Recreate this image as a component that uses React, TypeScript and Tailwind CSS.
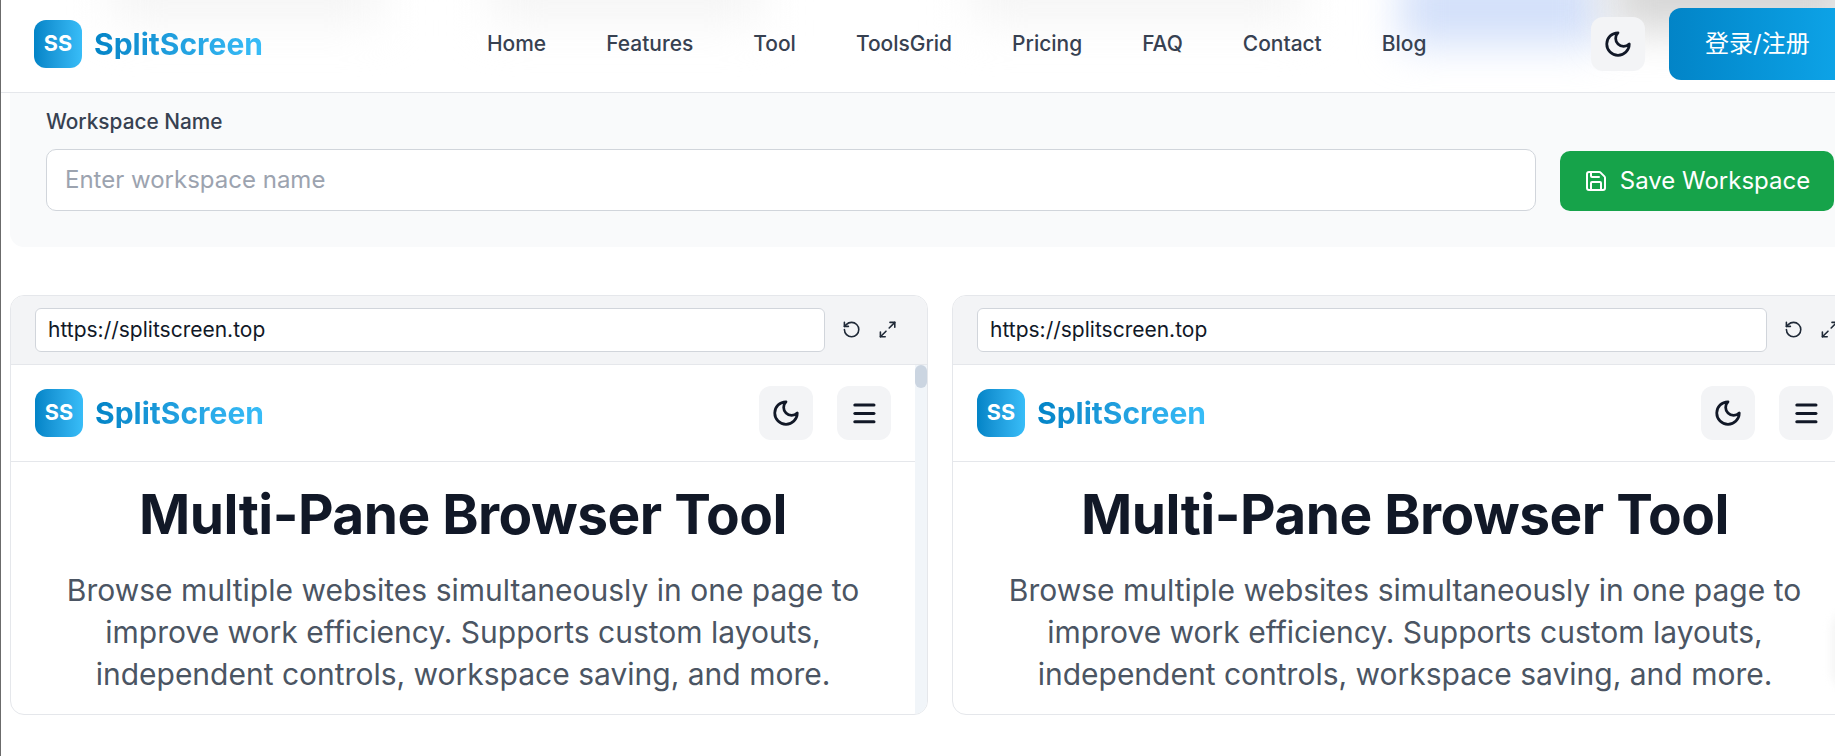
import { Menu, Save, RotateCcw, Maximize2 } from "lucide-react";

const NAV_LINKS = ["Home", "Features", "Tool", "ToolsGrid", "Pricing", "FAQ", "Contact", "Blog"];

const MoonIcon = () => (
  <svg viewBox="0 0 24 24" fill="none" stroke="currentColor" strokeWidth="2.2" strokeLinecap="round" strokeLinejoin="round" className="w-[30px] h-[30px] text-[#111827]">
    <path d="M12 3a6 6 0 0 0 9 9 9 9 0 1 1-9-9Z" />
  </svg>
);

const Logo = () => (
  <div className="flex items-center gap-[12px]">
    <div className="w-[48px] h-[48px] rounded-[12px] bg-gradient-to-r from-[#0284c7] to-[#38bdf8] flex items-center justify-center">
      <span className="text-white font-bold text-[21.6px] leading-none">SS</span>
    </div>
    <span className="text-[30px] font-bold leading-none bg-gradient-to-r from-[#0284c7] to-[#38bdf8] bg-clip-text text-transparent">
      SplitScreen
    </span>
  </div>
);

const Pane = () => (
  <div className="w-[918px] h-[420px] shrink-0 rounded-[14px] border border-[#e5e7eb] overflow-hidden flex flex-col bg-white">
    <div className="h-[69px] shrink-0 bg-[#f3f4f6] border-b border-[#e5e7eb] flex items-center pl-[24px]">
      <div className="w-[790px] h-[44px] shrink-0 bg-white border border-[#d1d5db] rounded-[6px] flex items-center pl-[12px] text-[21px] text-[#111827]">
        https://splitscreen.top
      </div>
      <RotateCcw className="w-[19.2px] h-[19.2px] ml-[17px] text-[#1f2937]" />
      <Maximize2 className="w-[19.2px] h-[19.2px] ml-[17px] text-[#1f2937]" />
    </div>
    <div className="flex-1 flex min-h-0">
      <div className="flex-1 min-w-0">
        <div className="h-[97px] border-b border-[#e5e7eb] flex items-center justify-between pl-[24px] pr-[24px]">
          <Logo />
          <div className="flex items-center gap-[24px]">
            <div className="w-[54px] h-[54px] rounded-[12px] bg-[#f3f4f6] flex items-center justify-center">
              <MoonIcon />
            </div>
            <div className="w-[54px] h-[54px] rounded-[12px] bg-[#f3f4f6] flex items-center justify-center">
              <Menu strokeWidth={2.5} className="w-[28.8px] h-[28.8px] text-[#111827]" />
            </div>
          </div>
        </div>
        <div className="px-[24px] text-center">
          <h1 className="mt-[18px] text-[55px] tracking-[-0.52px] leading-[69px] font-bold text-[#111827]">Multi-Pane Browser Tool</h1>
          <p className="mt-[20px] text-[30px] leading-[42px] text-[#4b5563]">
            Browse multiple websites simultaneously in one page to improve work efficiency. Supports custom layouts, independent controls, workspace saving, and more.
          </p>
        </div>
      </div>
      <div className="w-[12px] shrink-0 bg-[#f1f5f9]">
        <div className="h-[23px] rounded-full bg-[#cbd5e1]" />
      </div>
    </div>
  </div>
);

export default function App() {
  return (
    <div className="relative w-screen h-screen overflow-hidden bg-white border-l border-[#6b6b6b] font-['Inter',sans-serif]">
      <header className="relative h-[93px] border-b border-[#e5e7eb] bg-white overflow-hidden">
        {/* blurred page content behind the sticky nav */}
        <div className="absolute left-[110px] top-[-40px] w-[270px] h-[60px] bg-[#f4f4f4] blur-[24px]" />
        <div className="absolute left-[490px] top-[-40px] w-[270px] h-[60px] bg-[#f4f4f4] blur-[24px]" />
        <div className="absolute left-[970px] top-[-40px] w-[330px] h-[60px] bg-[#f4f4f4] blur-[24px]" />
        <div className="absolute left-[1400px] top-[-30px] w-[200px] h-[75px] bg-[#d3e0fa] blur-[20px]" />
        <div className="absolute left-[1610px] top-[-40px] w-[240px] h-[70px] bg-[#d5d5d5] blur-[22px]" />
        <div className="relative h-[88px] flex items-center pl-[33px]">
          <Logo />
          <nav className="absolute left-[486px] top-0 h-full flex items-center gap-[60px] text-[20.96px] font-medium text-[#374151]">
            {NAV_LINKS.map((link) => (
              <span key={link}>{link}</span>
            ))}
          </nav>
          <div className="absolute left-[1590px] top-[17px] w-[54px] h-[54px] rounded-[12px] bg-[#f3f4f6] flex items-center justify-center">
            <MoonIcon />
          </div>
          <div className="absolute left-[1668px] top-[8px] w-[180px] h-[72px] rounded-[12px] bg-gradient-to-r from-[#0284c7] to-[#0ea5e9] flex items-center pl-[36px] text-white text-[24px] font-['Inter','Noto_Sans_CJK_SC',sans-serif]">
            登录/注册
          </div>
        </div>
      </header>
      <main className="pl-[9px] w-[1900px]">
        <section className="h-[154px] w-[1880px] bg-[#f9fafb] rounded-b-[14px] pl-[36px] pt-[15px]">
          <label className="block text-[20.8px] leading-[28px] font-medium text-[#374151]">Workspace Name</label>
          <div className="mt-[13px] w-[1788px] flex items-end gap-[24px]">
            <input
              readOnly
              placeholder="Enter workspace name"
              className="flex-1 h-[62px] bg-white border border-[#d1d5db] rounded-[10px] px-[18px] pb-[2px] text-[24px] placeholder:text-[#9ca3af]"
            />
            <button className="w-[274px] h-[60px] shrink-0 rounded-[10px] bg-[#16a34a] flex items-center justify-center gap-[12px] text-white text-[24px]">
              <Save className="w-[24px] h-[24px]" />
              Save Workspace
            </button>
          </div>
        </section>
        <div className="mt-[48px] flex gap-[24px]">
          <Pane />
          <Pane />
        </div>
      </main>
      {/* faint shadow of a floating button past the right edge */}
      <div className="absolute left-[1830px] top-[610px] w-[40px] h-[80px] rounded-full bg-[#f5f5f5] blur-[4px]" />
    </div>
  );
}
